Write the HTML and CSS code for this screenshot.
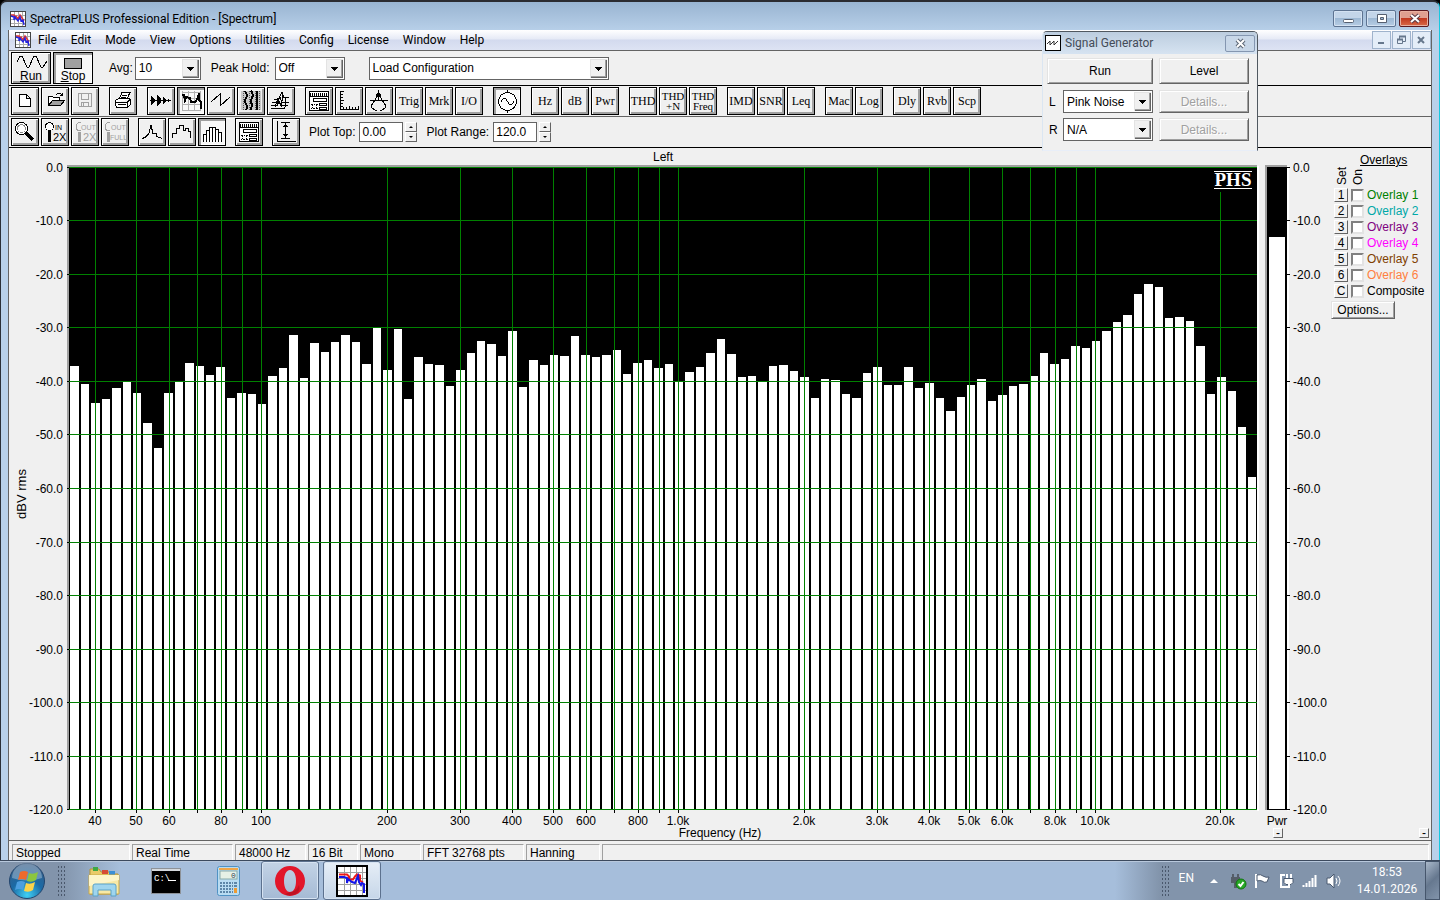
FILE: index.html
```html
<!DOCTYPE html>
<html lang="en">
<head>
  <meta charset="UTF-8">
  <title>SpectraPLUS Professional Edition - [Spectrum]</title>
  <link rel="stylesheet" href="styles.css">
</head>
<body>

  <!-- shared icons -->
  <svg class="defs" width="0" height="0">
    <symbol id="app" viewBox="0 0 16 16">
      <rect x=".5" y=".5" width="15" height="15" fill="#fff" stroke="#444"/>
      <path d="M4.5 1v14M8.5 1v14M12.5 1v14M1 4.5h14M1 8.5h14M1 12.5h14" stroke="#aaa" fill="none"/>
      <path d="M1 4l3 0 1 2 1-1 2 3 2-4 2 3 2 3" stroke="#e03030" stroke-width="1.4" fill="none"/>
      <path d="M1 5l3 1v3l1-3 3 4 2-4 1 4 2-1 1 5" stroke="#2222e0" stroke-width="1.4" fill="none"/>
    </symbol>
    <symbol id="panel" viewBox="1 1 26 26">
      <path d="M4.500 4.500h19v19h-19z" fill="#fff" stroke="#000"/>
      <path d="M5 7h18" stroke="#000" stroke-width="3" stroke-dasharray="1 1"/>
      <path d="M4 9.500h20M8.500 11.500h13v3h-13zM14.500 16.500h7v2h-7zM14.500 20.500h7v2h-7z" fill="#fff" stroke="#000"/>
      <path d="M6 17.500h2m1 0h1m1 0h2M7 18.500h1m3 0h1M6 21.500h1m1 0h2m1 0h2M7 20.500h1m3 0h1" stroke="#000"/>
    </symbol>
    <symbol id="folder" viewBox="0 0 32 32">
      <path d="M2 4h9l2 3h8l1 2h8v20H2z" fill="#e9cb68" stroke="#b89434"/>
      <path d="M5 2h5v4H5z" fill="#3fa845"/><path d="M14 5h6v4h-6z" fill="#d64b35"/><path d="M21 6h6v4h-6z" fill="#3b8fd6"/>
      <path d="M1 10h30v19H1z" fill="#f8e9a6" stroke="#c9a848"/>
      <path d="M1 10h30v5L1 21z" fill="#fdf5c9"/>
      <path d="M5 31V21q0-2 2-2h19q2 0 2 2v10h-5v-6H10v6z" fill="#9fd5ee" stroke="#5aa2c8"/>
    </symbol>
  </svg>

  <div class="window">
    <header class="titlebar">
      <svg class="app-icon" width="16" height="16"><use href="#app"/></svg>
      <span class="title">SpectraPLUS Professional Edition - [Spectrum]</span>
      <div class="win-buttons">
        <button aria-label="Minimize"><svg width="29" height="15"><rect x="9.500" y="8.500" width="10" height="3" rx="1" fill="#fff" stroke="#555f70"/></svg></button>
        <button aria-label="Restore"><svg width="29" height="15"><path d="M10.500 3.500h9v8h-9zM13.500 6.500h3v2h-3z" fill="#fff" fill-rule="evenodd" stroke="#555f70"/></svg></button>
        <button class="close" aria-label="Close"><svg width="29" height="15"><path d="M11 4l8 7M19 4l-8 7" stroke="#5a3a44" stroke-width="4"/><path d="M11 4l8 7M19 4l-8 7" stroke="#fff" stroke-width="2"/></svg></button>
      </div>
    </header>

    <div class="client">
      <nav class="menubar">
        <svg class="app-icon" width="16" height="16"><use href="#app"/></svg>
        <div class="menus">
          <button>File</button><button>Edit</button><button>Mode</button><button>View</button><button>Options</button><button>Utilities</button><button>Config</button><button>License</button><button>Window</button><button>Help</button>
        </div>
        <div class="mdi-buttons">
          <button aria-label="Minimize document"><svg width="16" height="16"><path d="M5 11h6" stroke="#66778c" stroke-width="2"/></svg></button>
          <button aria-label="Restore document"><svg width="16" height="16"><path d="M6.500 7V4.500h6v5H10M4.500 7.500h5v4h-5z" fill="none" stroke="#66778c"/><path d="M6 4.500h7M4 7.500h6" stroke="#66778c" stroke-width="2"/></svg></button>
          <button aria-label="Close document"><svg width="16" height="16"><path d="M5 5l6 6M11 5l-6 6" stroke="#66778c" stroke-width="2"/></svg></button>
        </div>
      </nav>

      <div class="toolbar main-bar">
        <button class="big"><svg width="38" height="16"><path d="M5 9l3-6h2l5 11h2l5-11h2l5 11h2l4-6" fill="none" stroke="#000"/></svg><span><u>R</u>un</span></button>
        <button class="big down"><svg width="38" height="16"><rect x="10.500" y="5.500" width="17" height="10" fill="#a0a0a0" stroke="#000"/></svg><span><u>S</u>top</span></button>
        <label for="avg">Avg:</label>
        <span class="combo avg"><select id="avg"><option>10</option></select></span>
        <label for="hold">Peak Hold:</label>
        <span class="combo hold"><select id="hold"><option>Off</option></select></span>
        <span class="combo config"><select aria-label="Configuration"><option>Load Configuration</option></select></span>
      </div>

      <div class="toolbar tools">
        <div class="group">
          <button aria-label="New"><svg viewBox="1 1 26 26"><path d="M8.500 7.500h7l4 4v8h-11zM15.500 7.500v4h4" fill="#fff" stroke="#000"/></svg></button>
          <button aria-label="Open"><svg viewBox="1 1 26 26"><path d="M7.500 18.500v-9h4l1 1h6v3" fill="#fff" stroke="#000"/><path d="M7.500 18.500l4-5h12l-4 5z" fill="#a0a0a0" stroke="#000"/><path d="M15 8q4-4 6 1m-2-.5h2.500v-3" fill="none" stroke="#000"/></svg></button>
          <button aria-label="Save" disabled><svg viewBox="1 1 26 26"><path d="M7.500 6.500h13v13h-12l-1-1zM10.500 6.500v6h7v-6M10.500 19v-4h7v4M12.500 16v3" fill="none" stroke="#a0a0a0"/></svg></button>
        </div>
        <div class="group">
          <button aria-label="Print"><svg viewBox="1 1 26 26"><path d="M10 12l3-6.500h8L18 12M6.500 13.500l3-2h11l1 2v4l-3 2.500h-11l-1-2.500zM7 15.500h11l3-3M18.500 15v5" fill="#fff" stroke="#000"/><path d="M13 8.500h5M12 10.500h5M9 17.500h8" stroke="#000"/></svg></button>
        </div>
        <div class="group">
          <button aria-label="Time series"><svg viewBox="1 1 26 26"><path d="M3 13.500h21M4.500 9v9M5.500 10v7M6.500 11v5M7.500 12v3M10.500 8v11M11.500 9v9M12.500 10v7M13.500 11v5M16.500 10v7M17.500 11v5M18.500 12v3M21.500 12v3" stroke="#000"/></svg></button>
          <button class="down" aria-label="Spectrum"><svg viewBox="1 1 26 26"><path d="M5.500 4v20M11.500 4v20M17.500 4v20M23.500 4v20M5 5.500h19M5 11.500h19M5 17.500h19M5 23.500h19" stroke="#b0b0b0"/><path d="M5 8h2l1 5 1-3 4 1 1 4h4l3-4 1-5v7l2 2v7" fill="none" stroke="#000" stroke-width="2"/></svg></button>
          <button aria-label="Phase"><svg viewBox="1 1 26 26"><path d="M4 15l9-8v12l10-9" fill="none" stroke="#000"/></svg></button>
          <button aria-label="Spectrogram"><svg viewBox="1 1 26 26"><rect x="4" y="4" width="20" height="19" fill="#c8c8c8"/><path d="M6.500 4v19M12.500 4v19M18.500 4v19M22.500 4v19" stroke="#555" stroke-dasharray="1 1"/><path d="M8 4q3 4 1 7t0 6 0 6M14 4q3 3 1 7t0 6l-1 6M20 4q-1 3 0 7t0 12" fill="none" stroke="#000" stroke-width="2"/></svg></button>
          <button aria-label="Surface"><svg viewBox="1 1 26 26"><path d="M4 21.500h13l2-3M4 18.500h6l2-4 2 4h7M5 15.500h5l3-5 2 5h7M7 12.500h4l4-7 2 5h5M14 20l2-12M8 20l3-9M18 18l1-8" fill="none" stroke="#000"/></svg></button>
        </div>
        <div class="group">
          <button aria-label="Settings"><svg><use href="#panel"/></svg></button>
          <button aria-label="Scaling"><svg viewBox="1 1 26 26"><path d="M5.500 4v18.500H24M5 4.500h4M5 7.500h3M5 10.500h3M5 13.500h4M5 16.500h3M5 19.500h3M8.500 22v-2M11.500 22v-2M14.500 22v-3M17.500 22v-2M20.500 22v-2M23.500 22v-3" fill="none" stroke="#000"/></svg></button>
          <button aria-label="Calibration"><svg viewBox="1 1 26 26"><path d="M13.500 3v4M13 8l-5 8M14 8l5 8M5 13.500h18M9 15q-4 4-2 6l3 2h2M18 15q4 4 2 6l-3 2h-2M13.500 8v6" fill="none" stroke="#000"/><path d="M11 8l2.500-3 2.500 3-2.500 4z"/></svg></button>
          <button>Trig</button><button>Mrk</button><button>I/O</button>
        </div>
        <div class="group">
          <button class="down" aria-label="Generator"><svg viewBox="1 1 26 26"><circle cx="14.500" cy="14.500" r="9" fill="#fff" stroke="#000"/><path d="M14.500 3v3M14.500 23v3M8 15l1-2 2-2 2 1 3 5 2 1 2-2 1-2" fill="none" stroke="#000"/></svg></button>
        </div>
        <div class="group"><button>Hz</button><button>dB</button><button>Pwr</button></div>
        <div class="group"><button>THD</button><button class="two">THD<br>+N</button><button class="two">THD<br>Freq</button></div>
        <div class="group"><button>IMD</button><button>SNR</button><button>Leq</button></div>
        <div class="group"><button>Mac</button><button>Log</button></div>
        <div class="group"><button>Dly</button><button>Rvb</button><button>Scp</button></div>
      </div>

      <div class="toolbar plot-bar">
        <div class="group">
          <button aria-label="Zoom"><svg viewBox="1 1 26 26"><circle cx="10.500" cy="10.500" r="6" fill="#fff" stroke="#000"/><circle cx="10.500" cy="10.500" r="4" fill="none" stroke="#888"/><path d="M15 15l7 7" stroke="#000" stroke-width="3"/></svg></button>
          <button class="zoom" aria-label="Zoom in 2X"><svg viewBox="1 1 26 26"><circle cx="8.500" cy="8.500" r="4" fill="#fff" stroke="currentColor"/><path d="M8.500 13v2M8.500 15v9" stroke="currentColor" stroke-width="3"/><text x="14" y="12" class="s">IN</text><text x="12" y="23">2X</text></svg></button>
          <button class="zoom" aria-label="Zoom out 2X" disabled><svg viewBox="1 1 26 26"><path d="M10 5q-5-1-5 4 0 4 5 4" fill="none" stroke="currentColor"/><path d="M8.500 14v10" stroke="currentColor" stroke-width="3"/><text x="10" y="12" class="s">OUT</text><text x="12" y="23">2X</text></svg></button>
          <button class="zoom" aria-label="Zoom out full" disabled><svg viewBox="1 1 26 26"><path d="M9 5q-5-1-5 4 0 4 5 4" fill="none" stroke="currentColor"/><path d="M7.500 14v10" stroke="currentColor" stroke-width="3"/><text x="10" y="12" class="s">OUT</text><text x="9" y="22" class="s">FULL</text></svg></button>
        </div>
        <div class="group">
          <button aria-label="Line plot"><svg viewBox="1 1 26 26"><path d="M4 20.500l3-1 4-4 2-8 2 8 3 0 1 3 5 2" fill="none" stroke="#000"/></svg></button>
          <button aria-label="Step plot"><svg viewBox="1 1 26 26"><path d="M4.500 20v-4.500h4v-5h3v-3h4v5h2v-2h3v3h2V20" fill="none" stroke="#000"/></svg></button>
          <button class="down" aria-label="Bar plot"><svg viewBox="1 1 26 26"><path d="M5.500 24v-7.500h3V24M8.500 24V12.500h3V24M11.500 24V9.500h3V24M14.500 24V9.500h3V24M17.500 24V11.500h3V24M20.500 24V14.500h3V24" fill="#fff" stroke="#000"/></svg></button>
        </div>
        <div class="group">
          <button aria-label="Plot options"><svg><use href="#panel"/></svg></button>
        </div>
        <div class="group">
          <button aria-label="Fit vertical"><svg viewBox="1 1 26 26"><path d="M5.500 3v20.500H24M9 4.500h9M9 20.500h9M13.500 5v15M11 8.500h5M12 7.500h3M11 16.500h5M12 17.500h3" fill="none" stroke="#000"/></svg></button>
        </div>
        <div class="field">
          <label for="top">Plot Top:</label>
          <input type="text" id="top" value="0.00">
          <span class="spin"><button aria-label="Top up"></button><button aria-label="Top down"></button></span>
        </div>
        <div class="field">
          <label for="range">Plot Range:</label>
          <input type="text" id="range" value="120.0">
          <span class="spin"><button aria-label="Range up"></button><button aria-label="Range down"></button></span>
        </div>
      </div>

      <main class="view">
        <div class="chart">
          <svg id="plot" viewBox="9 148 1321 692" preserveAspectRatio="xMidYMin meet"></svg>
          <button class="mini" aria-label="Hide power">-</button>
        </div>
        <aside class="overlays">
          <h2>Overlays</h2>
          <div class="heads"><span>Set</span><span>On</span></div>
          <div class="row c1"><button>1</button><input type="checkbox" id="o1"><label for="o1">Overlay 1</label></div>
          <div class="row c2"><button>2</button><input type="checkbox" id="o2"><label for="o2">Overlay 2</label></div>
          <div class="row c3"><button>3</button><input type="checkbox" id="o3"><label for="o3">Overlay 3</label></div>
          <div class="row c4"><button>4</button><input type="checkbox" id="o4"><label for="o4">Overlay 4</label></div>
          <div class="row c5"><button>5</button><input type="checkbox" id="o5"><label for="o5">Overlay 5</label></div>
          <div class="row c6"><button>6</button><input type="checkbox" id="o6"><label for="o6">Overlay 6</label></div>
          <div class="row"><button>C</button><input type="checkbox" id="o7"><label for="o7">Composite</label></div>
          <button class="options">Options...</button>
          <button class="mini" aria-label="Hide overlays">-</button>
        </aside>
      </main>

      <footer class="status">
        <span class="w1">Stopped</span><span class="w2">Real Time</span><span class="w3">48000 Hz</span><span class="w4">16 Bit</span><span class="w5">Mono</span><span class="w2">FFT 32768 pts</span><span class="w6">Hanning</span><span class="rest"></span>
      </footer>
    </div>

    <section class="generator">
      <div class="gen-title">
        <svg width="16" height="16"><rect x=".5" y=".5" width="15" height="15" fill="#fff" stroke="#000"/><path d="M2 9l3-3v4l4-4v4l4-4" fill="none" stroke="#333"/></svg>
        <span>Signal Generator</span>
        <button aria-label="Close generator"><svg width="28" height="15"><path d="M11 4l7 7M18 4l-7 7" stroke="#5b6675" stroke-width="4"/><path d="M11 4l7 7M18 4l-7 7" stroke="#fff" stroke-width="2"/></svg></button>
      </div>
      <div class="gen-body">
        <button>Run</button>
        <button>Level</button>
        <div class="channel"><label for="left">L</label><span class="combo"><select id="left"><option>Pink Noise</option></select></span></div>
        <button disabled>Details...</button>
        <div class="channel"><label for="right">R</label><span class="combo"><select id="right"><option>N/A</option></select></span></div>
        <button disabled>Details...</button>
      </div>
    </section>
  </div>

  <div class="taskbar">
    <button class="start" aria-label="Start">
      <svg width="38" height="38" viewBox="0 0 38 38">
        <defs><radialGradient id="orb" cx=".5" cy=".9" r=".9"><stop offset="0" stop-color="#3fd0f5"/><stop offset=".5" stop-color="#1b6aa5"/><stop offset="1" stop-color="#3b5f88"/></radialGradient></defs>
        <circle cx="19" cy="19" r="17.500" fill="url(#orb)" stroke="#23466e"/>
        <path d="M4 16a15 15 0 0 1 30 0q-15 5-30 0z" fill="#fff" opacity=".3"/>
        <path d="M12 10q4-2 8 0l-2 8q-4-2-8 0z" fill="#ee6a2c"/><path d="M21 11q4 2 9-1l-2 8q-4 3-9 1z" fill="#8cc63f"/>
        <path d="M9 20q4-2 8 0l-2 8q-4-2-8 0z" fill="#4c9fe0"/><path d="M18 21q4 2 9-1l-2 8q-4 3-9 1z" fill="#fcd34a"/>
      </svg>
    </button>
    <span class="grip"></span>
    <button class="task" aria-label="Explorer"><svg width="32" height="32"><use href="#folder"/></svg></button>
    <button class="task" aria-label="Command prompt"><svg width="32" height="32"><rect x="1.500" y="3.500" width="29" height="25" fill="#000" stroke="#8d9298"/><path d="M2 5h28" stroke="#d5d9dd" stroke-width="2"/><text x="4" y="16" class="cmd">C:\</text><path d="M18 15.500h8" stroke="#fff"/></svg></button>
    <button class="task" aria-label="Calculator"><svg width="32" height="32"><rect x="5.500" y="1.500" width="22" height="29" rx="2" fill="#b9dcf2" stroke="#4f92c4"/><path d="M7 4h19" stroke="#eda64c" stroke-width="2"/><rect x="8" y="6" width="17" height="8" fill="#e6f1e6" stroke="#8aa"/><text x="19" y="13" class="zero">0</text><path d="M8 18h13M8 21h13M8 24h13M8 27h13" stroke="#5d86a8" stroke-width="2" stroke-dasharray="2 1"/><path d="M22 18h3M22 21h3" stroke="#5d86a8" stroke-width="2"/><path d="M23.500 23v5" stroke="#ee9b32" stroke-width="3"/></svg></button>
    <button class="task open" aria-label="Opera"><svg width="32" height="32"><path fill-rule="evenodd" d="M16 1a15 15 0 1 0 0 30 15 15 0 0 0 0-30zm0 4c4 0 6 5 6 11s-2 11-6 11-6-5-6-11 2-11 6-11z" fill="#e2162a"/><path d="M16 27q6 0 9-7 2 6-3 9-7 3-11 0z" fill="#a8101f" opacity=".6"/></svg></button>
    <button class="task open active" aria-label="SpectraPLUS"><svg width="32" height="32"><rect x="1" y="1" width="30" height="30" fill="#fff" stroke="#000" stroke-width="2"/><path d="M8.500 2v28M14.500 2v28M20.500 2v28M26.500 2v28M2 7.500h28M2 13.500h28M2 19.500h28M2 25.500h28" stroke="#a0a0a0"/><path d="M3 9.500h8l2 2v3h4l2-3 2-2 3 1v5l3 2" fill="none" stroke="#f01818" stroke-width="2"/><path d="M3 12h5l3 1v5l1-4 4 3 3 1 3-7 1 6 2 3 1-2 2 1v9" fill="none" stroke="#1515e8" stroke-width="2"/></svg></button>

    <div class="tray">
      <span class="grip"></span>
      <span class="lang">EN</span>
      <svg width="14" height="6"><path d="M1 5l4-4 4 4z" fill="#fff"/></svg>
      <svg width="18" height="18"><path d="M3 2h2v3h3V2h2v3h1v6H2V5h1zM5 11h3v5H5z" fill="#555d68"/><circle cx="12" cy="12" r="5" fill="#27a927" stroke="#117511"/><path d="M9.500 12l2 2 3-4" fill="none" stroke="#fff" stroke-width="2"/></svg>
      <svg width="18" height="18"><path d="M3 2v14" stroke="#fff" stroke-width="2"/><path d="M4 3q4-1 6 1 3 2 6 1l-2 5q-3 1-5-1-2-1-5 0z" fill="#fff" stroke="#4b5a70"/></svg>
      <svg width="18" height="18"><path d="M8 3h-4v12h8" fill="none" stroke="#fff" stroke-width="2"/><path d="M7 6.500h9v4l-2 2h-5l-2-2z" fill="#fff" stroke="#4b5a70"/><path d="M10 2v4M14 2v4M12 12v4" stroke="#fff" stroke-width="2"/></svg>
      <svg width="18" height="18"><path d="M2.500 15v-2M5.500 15v-4M8.500 15V9M11.500 15V6M14.500 15V3" stroke="#fff" stroke-width="2"/></svg>
      <svg width="18" height="18"><path d="M2 6h3l4-4v14l-4-4H2z" fill="#fff" stroke="#4b5a70"/><path d="M11 6q2 3 0 6M13 4q4 5 0 10" fill="none" stroke="#fff"/></svg>
      <div class="clock"><span>18:53</span><span>14.01.2026</span></div>
      <button class="desktop" aria-label="Show desktop"></button>
    </div>
  </div>

  <script src="plot.js"></script>
</body>
</html>
```

FILE: styles.css
```css
* {
  box-sizing: border-box;
}

body {
  margin: 0;
  height: 100vh;
  display: flex;
  flex-direction: column;
  overflow: hidden;
  font-family: "Liberation Sans", Arial, sans-serif;
  font-size: 12px;
  color: #000;
  background-color: #000;
}

button, input, select {
  font: inherit;
  color: inherit;
  margin: 0;
  padding: 0;
  border-radius: 0;
}

svg {
  display: block;
  flex: none;
}

.defs {
  position: absolute;
}

/* window frame */
.window {
  position: relative;
  flex: 1;
  min-height: 0;
  display: flex;
  flex-direction: column;
  padding: 0 7px;
  border-top: 2px solid #2b2b30;
  border-left: 1px solid #2b3038;
  border-right: 1px solid #16c8e0;
  border-radius: 7px 7px 0 0;
  background: linear-gradient(#99b4d1, #b9d1ea 30px, #b9d1ea);
}

.titlebar {
  height: 28px;
  display: flex;
  align-items: center;
  gap: 4px;
  padding: 5px 1px 0 2px;
  font-family: Roboto, sans-serif;
}

.title {
  flex: 1;
}

.win-buttons {
  display: flex;
  gap: 3px;
  padding: 0 2px 0 0;
}

.win-buttons button {
  width: 30px;
  height: 17px;
  border: 1px solid #5d7391;
  border-radius: 2px;
  box-shadow: inset 0 0 0 1px #d4e2f2;
  background: linear-gradient(#c3d5e9 50%, #9db8d4 50%, #b7cde4);
}

.win-buttons .close {
  border-color: #5a1a20;
  box-shadow: inset 0 0 0 1px #e8b0a0;
  background: linear-gradient(#dfa090 50%, #c23a20 50%, #d86a48);
}

.client {
  flex: 1;
  min-height: 0;
  display: flex;
  flex-direction: column;
  border-right: 1px solid #646464;
  border-left: 1px solid #646464;
  background-color: #f0f0f0;
}

/* menu */
.menubar {
  height: 20px;
  display: flex;
  align-items: center;
  padding-left: 6px;
  background: linear-gradient(#fff, #e6eaf6 45%, #d3daee 50%, #dde3f3);
  font-family: Roboto, sans-serif;
}

.menus {
  flex: 1;
  display: flex;
}

.menus button {
  padding: 0 7px;
  border: none;
  background: none;
}

.mdi-buttons {
  display: flex;
  gap: 1px;
}

.mdi-buttons button {
  width: 19px;
  height: 18px;
  border: 1px solid #9fb3cc;
  background-color: #e4edf8;
}

/* toolbars */
.toolbar {
  display: flex;
  align-items: center;
  padding: 1px 2px;
  border-bottom: 1px solid #000;
}

.main-bar {
  height: 36px;
  gap: 2px;
  border-top: 1px solid #646464;
}

.tools {
  height: 31px;
  gap: 10px;
  border-bottom-color: #646464;
}

.plot-bar {
  height: 31px;
  gap: 9px;
}

.group {
  display: flex;
  gap: 2px;
}

.big,
.group button {
  width: 28px;
  height: 28px;
  border: 1px solid #000;
  background-color: #f0f0f0;
  box-shadow: inset 1px 1px #fff, inset -2px -2px #a0a0a0;
  font-family: "Liberation Serif", serif;
  line-height: 10px;
  white-space: nowrap;
}

.group svg {
  width: 26px;
  height: 26px;
}

.group svg,
.big svg {
  shape-rendering: crispEdges;
}

.group .two {
  font-size: 11px;
}

.big {
  width: 40px;
  height: 32px;
  display: flex;
  flex-direction: column;
  align-items: center;
  font-family: inherit;
  line-height: 14px;
}

.big.down,
.group .down {
  background-color: #f8f8f8;
  box-shadow: inset 2px 2px #a0a0a0, inset -1px -1px #fff;
}

.group button:disabled {
  color: #a0a0a0;
}

.zoom text {
  font: 11px "Liberation Sans", sans-serif;
  fill: currentColor;
}

.zoom text.s {
  font-size: 7px;
}

.main-bar label[for="avg"] {
  padding-left: 14px;
}

.main-bar label[for="hold"] {
  padding: 0 3px 0 8px;
}

.combo {
  position: relative;
  height: 23px;
  border: 1px solid #646464;
  background-color: #fff;
}

.combo select {
  width: 100%;
  height: 21px;
  padding-left: 3px;
  border: none;
  background: none;
  appearance: none;
}

.combo::after {
  content: "";
  position: absolute;
  top: 1px;
  right: 1px;
  width: 17px;
  height: 19px;
  pointer-events: none;
  background: linear-gradient(#000, #000) 5px 8px / 7px 1px no-repeat,
    linear-gradient(#000, #000) 6px 9px / 5px 1px no-repeat,
    linear-gradient(#000, #000) 7px 10px / 3px 1px no-repeat,
    linear-gradient(#000, #000) 8px 11px / 1px 1px no-repeat #f0f0f0;
  box-shadow: inset 1px 1px #e3e3e3, inset -1px -1px #646464, inset -2px -2px #a0a0a0;
}

.avg {
  width: 66px;
}

.hold {
  width: 70px;
}

.config {
  width: 240px;
  margin-left: 22px;
}

.field {
  display: flex;
  align-items: center;
  gap: 2px;
}

.field label {
  padding-right: 2px;
}

.field input {
  width: 44px;
  height: 20px;
  padding: 0 2px;
  border: 1px solid #646464;
}

.spin {
  display: flex;
  flex-direction: column;
}

.spin button {
  display: flex;
  align-items: center;
  justify-content: center;
  width: 12px;
  height: 10px;
  border: 1px solid #646464;
  border-top-color: #fff;
  border-left-color: #fff;
  background-color: #f0f0f0;
}

.spin button::after {
  content: "";
  border: 2px solid transparent;
  border-top: none;
  border-bottom-color: #000;
}

.spin button:last-child::after {
  border-bottom: none;
  border-top: 2px solid #000;
}

/* plot */
.view {
  flex: 1;
  min-height: 0;
  display: flex;
}

.chart {
  position: relative;
  flex: 1;
  min-width: 0;
}

.chart > svg {
  width: 100%;
  height: 100%;
  shape-rendering: crispEdges;
}

#plot text {
  font-size: 12px;
}

#plot .unit {
  font-size: 13px;
}

#plot .logo {
  font: bold 19px "Liberation Serif", serif;
  fill: #fff;
}

.mini {
  width: 10px;
  height: 10px;
  border: 1px solid #646464;
  border-top-color: #fff;
  border-left-color: #fff;
  background-color: #f0f0f0;
  line-height: 6px;
}

.chart .mini {
  position: absolute;
  right: 47px;
  bottom: 2px;
}

.overlays {
  width: 101px;
  display: flex;
  flex-direction: column;
  padding: 5px 0 2px 1px;
}

.overlays h2 {
  margin: 0 0 0 29px;
  font-size: 12px;
  font-weight: normal;
  line-height: 14px;
  text-decoration: underline;
}

.heads {
  display: flex;
  gap: 2px;
  padding-left: 4px;
  height: 20px;
  align-items: flex-end;
}

.heads span {
  writing-mode: vertical-rl;
  transform: rotate(180deg);
  line-height: 14px;
  padding-top: 2px;
}

.row {
  height: 16px;
  display: flex;
  align-items: center;
  padding-left: 3px;
}

.row button {
  width: 14px;
  height: 14px;
  border: 1px solid #646464;
  border-top-color: #fff;
  border-left-color: #fff;
  background-color: #f0f0f0;
  line-height: 12px;
}

.row input {
  appearance: none;
  width: 13px;
  height: 13px;
  margin: 0 3px 0 3px;
  border: 2px solid #e3e3e3;
  border-top-color: #808080;
  border-left-color: #808080;
  background-color: #fff;
}

.c1 label { color: #008000; }
.c2 label { color: #00a8a8; }
.c3 label { color: #800080; }
.c4 label { color: #ff00ff; }
.c5 label { color: #804000; }
.c6 label { color: #ff8040; }

.options,
.gen-body button {
  border: 1px solid #646464;
  border-top-color: #e3e3e3;
  border-left-color: #e3e3e3;
  box-shadow: inset 1px 1px #fff, inset -1px -1px #a0a0a0;
  background-color: #f0f0f0;
}

.options {
  width: 64px;
  height: 18px;
  margin-top: 2px;
  line-height: 14px;
}

.overlays .mini {
  margin: auto 2px 0 auto;
}

/* status bar */
.status {
  height: 20px;
  display: flex;
  gap: 2px;
  padding: 3px 2px 0 3px;
  border-top: 1px solid #646464;
}

.status span {
  padding-left: 3px;
  border-top: 1px solid #a0a0a0;
  border-left: 1px solid #a0a0a0;
  border-right: 1px solid #fff;
  line-height: 16px;
  white-space: nowrap;
}

.w1 { width: 118px; }
.w2 { width: 101px; }
.w3 { width: 71px; }
.w4 { width: 50px; }
.w5 { width: 61px; }
.w6 { width: 74px; }
.rest { flex: 1; }

/* signal generator */
.generator {
  position: absolute;
  top: 29px;
  right: 181px;
  width: 216px;
  height: 120px;
  border: 1px solid #505860;
  border-left-color: #dbe6f2;
  border-bottom-color: #e8eef8;
  border-radius: 5px 5px 0 0;
  background-color: #f0f0f0;
  overflow: hidden;
}

.gen-title {
  height: 22px;
  display: flex;
  align-items: center;
  gap: 4px;
  padding: 0 2px;
  background: linear-gradient(#bccddf, #d6e3f1);
  color: #444c58;
  font-family: Roboto, sans-serif;
}

.gen-title span {
  flex: 1;
}

.gen-title button {
  width: 30px;
  height: 17px;
  border: 1px solid #8496b0;
  border-radius: 2px;
  background-color: #c8d7e8;
}

.gen-body {
  display: grid;
  grid-template-columns: 106px 90px;
  grid-template-rows: 27px 23px 23px;
  gap: 5px 6px;
  padding: 4px;
}

.gen-body button {
  height: 26px;
}

.gen-body button:disabled {
  height: 23px;
  color: #a0a0a0;
  text-shadow: 1px 1px #fff;
}

.channel {
  display: flex;
  align-items: center;
  padding-left: 2px;
}

.channel label {
  width: 14px;
}

.channel .combo {
  flex: 1;
}

/* taskbar */
.taskbar {
  height: 40px;
  display: flex;
  align-items: center;
  border-top: 1px solid #3c4a5e;
  background: linear-gradient(90deg, #8294ab, #8294ab 60px, #a6bedb 120px, #a6bedb calc(100% - 325px), #8294ab calc(100% - 280px), #8294ab);
  box-shadow: inset 0 1px #b8c8dc;
  color: #fff;
  font-family: Roboto, sans-serif;
}

.start {
  margin: 0 11px 0 8px;
  border: none;
  background: none;
}

.grip {
  width: 9px;
  height: 31px;
  background: radial-gradient(circle, #4a586c 1px, transparent 1px) 0 0 / 3px 4px;
}

.task {
  width: 58px;
  height: 39px;
  margin-right: 4px;
  display: flex;
  align-items: center;
  justify-content: center;
  border: 1px solid transparent;
  border-radius: 3px;
  background: none;
}

.grip + .task {
  margin-left: 9px;
}

.open {
  border-color: #5c718e;
  box-shadow: inset 0 0 0 1px #d6e3f2;
  background: linear-gradient(#c3d3e6, #a5bad4);
}

.active {
  background: linear-gradient(#e6eef7, #c6d6e8);
}

.cmd {
  font: 9px "Liberation Mono", monospace;
  fill: #fff;
}

.zero {
  font: 8px "Liberation Mono", monospace;
  fill: #345;
}

.tray {
  margin-left: auto;
  height: 39px;
  display: flex;
  align-items: center;
  gap: 6px;
}

.lang {
  margin: 0 9px 6px 3px;
}

.clock {
  display: flex;
  flex-direction: column;
  align-items: center;
  width: 70px;
  padding-left: 6px;
  line-height: 17px;
}

.desktop {
  width: 15px;
  height: 39px;
  border: 1px solid #46566c;
  background: linear-gradient(135deg, #a9b8ca, #66788f 50%, #8294ab);
}
```

FILE: plot.js
```js
// top edge of each 1/12 octave bar
const tops = [
  366, 384, 403, 399, 388, 382, 393, 423, 448, 393, 382, 363, 366, 375, 367, 398, 393, 394, 404,
  376, 368, 335, 378, 343, 352, 342, 335, 342, 364, 328, 370, 329, 399, 357, 364, 365, 386, 370,
  353, 341, 344, 356, 331, 387, 360, 365, 355, 356, 336, 355, 357, 355, 350, 374, 363, 360, 368,
  364, 382, 372, 367, 353, 339, 354, 377, 376, 382, 366, 365, 371, 377, 398, 379, 380, 394, 398,
  373, 367, 385, 385, 367, 388, 383, 398, 411, 397, 385, 379, 401, 395, 386, 384, 376, 353, 364,
  359, 346, 348, 341, 331, 322, 315, 294, 284, 287, 318, 317, 321, 346, 394, 377, 391, 427, 477
];

const freqs = [
  [95, '40'], [136, '50'], [169, '60'], [197, ''], [221, '80'], [242, ''], [261, '100'],
  [387, '200'], [460, '300'], [512, '400'], [553, '500'], [586, '600'], [614, ''], [638, '800'],
  [659, ''], [678, '1.0k'], [804, '2.0k'], [877, '3.0k'], [929, '4.0k'], [969, '5.0k'],
  [1002, '6.0k'], [1030, ''], [1055, '8.0k'], [1076, ''], [1095, '10.0k'], [1220, '20.0k']
];

const levels = [167, 220, 274, 327, 381, 434, 488, 542, 595, 649, 702, 756, 809];

const rect = (x, y, w, h, fill) => `<rect x="${x}" y="${y}" width="${w}" height="${h}" fill="${fill}"/>`;
const text = (x, y, s, anchor) => `<text x="${x}" y="${y}" text-anchor="${anchor}">${s}</text>`;
const barX = i => Math.round(70.4 + i * 10.425);

let out = '';

// plot frame
out += rect(67, 165, 1190, 645, '#a0a0a0');
out += rect(1257, 166, 2, 645, '#fff');
out += rect(69, 167, 1188, 643, '#000');

tops.forEach((y, i) => {
  const right = Math.min(barX(i + 1) - 2, 1256);
  out += rect(barX(i), y, right - barX(i), 809 - y, '#fff');
});

freqs.forEach(([x, label]) => {
  out += rect(x, 167, 1, 643, '#008000');
  out += rect(x, 810, 1, 3, '#000');
  if (label) out += text(x, 825, label, 'middle');
});

// power meter
out += rect(1265, 165, 22, 645, '#a0a0a0');
out += rect(1287, 166, 2, 645, '#fff');
out += rect(1267, 167, 20, 643, '#000');
out += rect(1269, 237, 16, 572, '#fff');

levels.forEach((y, i) => {
  const label = i ? (-10 * i).toFixed(1) : '0.0';
  out += rect(69, y, 1188, 1, '#008000');
  out += rect(67, y, 2, 1, '#000');
  out += rect(1287, y, 3, 1, '#000');
  out += text(63, y + 5, label, 'end');
  out += text(1293, y + 5, label, 'start');
});

// logo
out += rect(1212, 168, 44, 24, '#000');
out += rect(1214, 171, 38, 1, '#fff') + rect(1214, 188, 38, 1, '#fff');
out += '<text class="logo" x="1233" y="186" text-anchor="middle">PHS</text>';

out += text(663, 161, 'Left', 'middle');
out += text(720, 837, 'Frequency (Hz)', 'middle');
out += text(1277, 825, 'Pwr', 'middle');
out += '<text class="unit" transform="translate(26 494) rotate(-90)" text-anchor="middle">dBV rms</text>';

document.getElementById('plot').innerHTML = out;
```
